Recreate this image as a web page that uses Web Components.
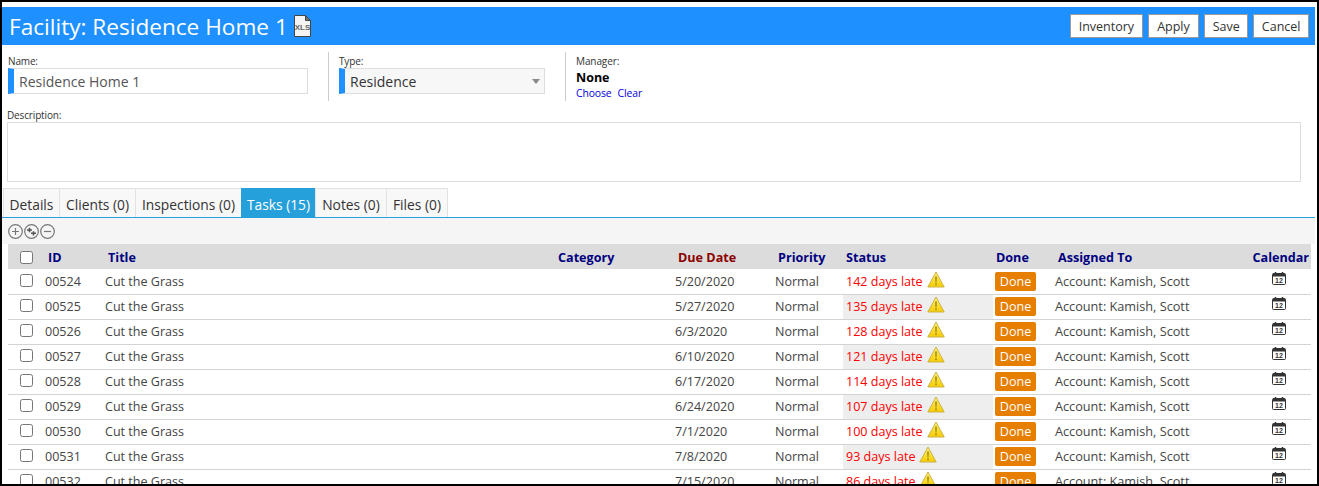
<!DOCTYPE html>
<html>
<head>
<meta charset="utf-8">
<title>Facility</title>
<style>
  html, body { margin: 0; height: 100%; background: #fff; }
  body {
    box-sizing: border-box;
    height: 486px;
    overflow: hidden;
    border: 2px solid #000;
    font-family: "Open Sans", "Noto Sans", sans-serif;
    color: #333;
  }
</style>
</head>
<body>
<facility-page></facility-page>

<script>
const FONT = `"Open Sans", "Noto Sans", sans-serif`;

class TitleBar extends HTMLElement {
  constructor() {
    super();
    this.attachShadow({ mode: "open" });
    this.shadowRoot.innerHTML = `
      <style>
        :host {
          display: flex;
          align-items: center;
          height: 38px;
          margin: 5px 2px 0 0;
          padding: 0 6px 0 7px;
          background: #1e90ff;
          color: #fff;
          font-family: ${FONT};
        }
        h1 {
          margin: 2px 0 0;
          font-size: 22.6px;
          font-weight: 400;
          line-height: 38px;
          white-space: nowrap;
        }
        svg { margin: 0 0 0 6px; }
        .actions { margin-left: auto; display: flex; gap: 5px; margin-top: -1px; }
      </style>
      <h1><slot></slot></h1>
      <svg width="17" height="22" viewBox="0 0 17 22">
        <path d="M.5.5h11l5 5v16H.5z" fill="#f4f4f4" stroke="#444"/>
        <path d="M11.5.5v5h5z" fill="#777" stroke="#444"/>
        <text x="8.5" y="15" text-anchor="middle" font-family="Liberation Sans" font-size="8" font-weight="700" fill="#666">XLS</text>
      </svg>
      <div class="actions"><slot name="actions"></slot></div>
    `;
  }
}

class BarButton extends HTMLElement {
  constructor() {
    super();
    this.attachShadow({ mode: "open" });
    this.shadowRoot.innerHTML = `
      <style>
        :host {
          display: block;
          box-sizing: border-box;
          height: 24px;
          padding: 0 7.5px;
          background: #fff;
          border: 1px solid #999;
          color: #333;
          font-family: ${FONT};
          font-size: 12.5px;
          line-height: 24px;
          white-space: nowrap;
        }
      </style>
      <slot></slot>
    `;
  }
}

class FormField extends HTMLElement {
  constructor() {
    super();
    this.attachShadow({ mode: "open" });
    const kind = this.getAttribute("kind");
    this.shadowRoot.innerHTML = `
      <style>
        :host {
          display: block;
          padding-top: 3px;
          font-family: ${FONT};
          color: #333;
        }
        label { display: block; font-size: 10px; line-height: 13px; height: 13px; letter-spacing: -.15px; }
        .box {
          box-sizing: border-box;
          display: flex;
          align-items: center;
          height: 26px;
          border: 1px solid #ddd;
          border-left: 6px solid #1e90ff;
          padding-left: 5px;
          font-size: 14px;
          color: ${kind === "select" ? "#333" : "#555"};
          background: ${kind === "select" ? "#f7f7f7" : "#fff"};
        }
        .arrow {
          margin-left: auto;
          margin-right: 4px;
          width: 0; height: 0;
          border: 4px solid transparent;
          border-top: 5px solid #888;
          border-bottom: 0;
          display: ${kind === "select" ? "block" : "none"};
        }
      </style>
      <label>${this.getAttribute("label")}</label>
      <div class="box"><slot></slot><span class="arrow"></span></div>
    `;
  }
}

class ManagerField extends HTMLElement {
  constructor() {
    super();
    this.attachShadow({ mode: "open" });
    this.shadowRoot.innerHTML = `
      <style>
        :host { display: block; padding-top: 3px; font-family: ${FONT}; color: #333; }
        label { display: block; font-size: 10px; line-height: 13px; letter-spacing: -.1px; }
        b { display: block; color: #000; font-size: 12.5px; line-height: 18px; margin-top: 1px; }
        .links { display: flex; gap: 6px; font-size: 10.4px; line-height: 14px; color: #0000e0; letter-spacing: -.1px; margin-top: -1px; }
      </style>
      <label>Manager:</label>
      <b>None</b>
      <div class="links"><span>Choose</span><span>Clear</span></div>
    `;
  }
}

class TabStrip extends HTMLElement {
  constructor() {
    super();
    this.attachShadow({ mode: "open" });
    this.shadowRoot.innerHTML = `
      <style>
        :host {
          display: flex;
          height: 30px;
          box-sizing: border-box;
          padding-left: 1px;
          margin-right: 2px;
          border-bottom: 1px solid #26a0da;
          font-family: ${FONT};
        }
      </style>
      <slot></slot>
    `;
  }
}

class TabItem extends HTMLElement {
  constructor() {
    super();
    this.attachShadow({ mode: "open" });
    this.shadowRoot.innerHTML = `
      <style>
        :host {
          display: block;
          box-sizing: border-box;
          height: 29px;
          border: 1px solid #e2e2e2;
          border-bottom: 0;
          margin-right: -1px;
          background: #f8f8f8;
          color: #333;
          font-size: 13.8px;
          line-height: 31px;
          text-align: center;
          white-space: nowrap;
        }
        :host([active]) { background: #26a0da; border-color: #26a0da; color: #fff; }
      </style>
      <slot></slot>
    `;
  }
}

class TreeTools extends HTMLElement {
  constructor() {
    super();
    this.attachShadow({ mode: "open" });
    this.shadowRoot.innerHTML = `
      <style>
        :host {
          display: flex;
          align-items: center;
          gap: 1px;
          height: 26px;
          box-sizing: border-box;
          padding-left: 6px;
          margin-right: 2px;
          background: #f5f5f5;
        }
        svg { fill: none; stroke: #777; stroke-width: 1.2; }
      </style>
      <svg width="15" height="15" viewBox="0 0 15 15"><circle cx="7.5" cy="7.5" r="6.8"/><path d="M4 7.5h7M7.5 4v7"/></svg>
      <svg width="15" height="15" viewBox="0 0 15 15"><circle cx="7.5" cy="7.5" r="6.8"/><path d="M3 6h5M5.5 3.8v4.4M7 9.3h5M9.5 7.2v4.2" stroke="#555" stroke-width="1.6"/></svg>
      <svg width="15" height="15" viewBox="0 0 15 15"><circle cx="7.5" cy="7.5" r="6.8"/><path d="M4 7.5h7"/></svg>
    `;
  }
}

const COLUMNS = "34px 60px 453px 117px 100px 71px 150px 59px 198px 61px";

class TaskHead extends HTMLElement {
  constructor() {
    super();
    this.attachShadow({ mode: "open" });
    const heads = [["ID", 6], ["Title", 6], ["Category", 3], ["Due Date", 6, "#8b0000"], ["Priority", 6], ["Status", 3], ["Done", 3], ["Assigned To", 6]];
    this.shadowRoot.innerHTML = `
      <style>
        :host {
          display: grid;
          grid-template-columns: ${COLUMNS};
          height: 25px;
          align-items: center;
          margin: 0 6px 1px;
          background: #dcdcdc;
          color: #000080;
          font-family: ${FONT};
          font-size: 12.6px;
          font-weight: 700;
        }
        span { padding-top: 1px; white-space: nowrap; }
        .box {
          box-sizing: border-box;
          width: 13px; height: 13px;
          margin: 2px 0 0 12px;
          border: 1px solid #767676;
          border-radius: 2.5px;
          background: #fff;
        }
        .cal { justify-self: end; padding-right: 2px; }
      </style>
      <div class="box"></div>
      ${heads.map(h => `<span style="padding-left:${h[1]}px;${h[2] ? "color:" + h[2] : ""}">${h[0]}</span>`).join("")}
      <span class="cal">Calendar</span>
    `;
  }
}

class TaskRow extends HTMLElement {
  constructor() {
    super();
    this.attachShadow({ mode: "open" });
    const shade = this.hasAttribute("shade");
    this.shadowRoot.innerHTML = `
      <style>
        :host {
          display: grid;
          grid-template-columns: ${COLUMNS};
          height: 25px;
          box-sizing: border-box;
          margin: 0 6px;
          border-bottom: 1px solid #d3d3d3;
          color: #444;
          font-family: ${FONT};
          font-size: 12.55px;
          line-height: 24px;
          white-space: nowrap;
        }
        span { padding-left: 3px; }
        .box {
          box-sizing: border-box;
          width: 13px; height: 13px;
          margin: 4px 0 0 12px;
          border: 1px solid #767676;
          border-radius: 2.5px;
          background: #fff;
        }
        .status {
          display: flex;
          align-items: center;
          gap: 4px;
          color: #f00;
          background: ${shade ? "#eee" : "transparent"};
        }
        .status svg { margin-top: -5px; }
        .done { padding: 2px 0 0 2px; }
        .done b {
          display: block;
          width: 41px; height: 19px;
          border-radius: 2px;
          background: #e67e00;
          color: #fff;
          font-weight: 400;
          text-align: center;
          line-height: 20px;
        }
        .who { font-size: 12.7px; line-height: 23px; }
        .cal { padding: 1px 0 0 22px; }
        .cal svg { display: block; }
      </style>
      <div class="box"></div>
      <span>${this.getAttribute("task")}</span>
      <span>Cut the Grass</span>
      <span></span>
      <span>${this.getAttribute("due")}</span>
      <span>Normal</span>
      <span class="status">${this.getAttribute("late")} days late
        <svg width="18" height="17" viewBox="0 0 18 17">
          <defs><linearGradient id="w" x1="0" y1="0" x2="0" y2="1"><stop offset="0" stop-color="#fff370"/><stop offset="1" stop-color="#f7cb00"/></linearGradient></defs>
          <path d="M9 1 17.2 16H.8z" fill="url(#w)" stroke="#c9b24a" stroke-linejoin="round"/>
          <path d="M8 5.5h2L9.6 11.5H8.4z" fill="#a8921c"/><circle cx="9" cy="13.3" r="1" fill="#a8921c"/>
        </svg>
      </span>
      <span class="done"><b>Done</b></span>
      <span class="who">Account: Kamish, Scott</span>
      <span class="cal">
        <svg width="14" height="15" viewBox="0 0 14 15">
          <path d="M1.5 2.5h11a1 1 0 0 1 1 1v9a1 1 0 0 1-1 1h-11a1 1 0 0 1-1-1v-9a1 1 0 0 1 1-1z" fill="#fff" stroke="#333"/>
          <path d="M1 2.5h12v3H1z" fill="#333"/><path d="M3.5 1v2M10.5 1v2" stroke="#333" stroke-width="1.5"/>
          <text x="7" y="12.3" text-anchor="middle" font-family="Liberation Sans" font-size="7" font-weight="700" fill="#333">12</text>
        </svg>
      </span>
    `;
  }
}

class FacilityPage extends HTMLElement {
  constructor() {
    super();
    this.attachShadow({ mode: "open" });
    const rows = [
      ["00524", "5/20/2020", 142], ["00525", "5/27/2020", 135], ["00526", "6/3/2020", 128],
      ["00527", "6/10/2020", 121], ["00528", "6/17/2020", 114], ["00529", "6/24/2020", 107],
      ["00530", "7/1/2020", 100], ["00531", "7/8/2020", 93], ["00532", "7/15/2020", 86]
    ];
    this.shadowRoot.innerHTML = `
      <style>
        :host { display: block; font-family: ${FONT}; color: #333; }
        .fields { display: flex; padding: 7px 0 0 6px; height: 49px; }
        .sep { border-left: 1px solid #ccc; height: 49px; }
        .desc { padding: 8px 16px 0 5px; }
        .desc label { display: block; font-size: 10px; line-height: 13px; letter-spacing: -.15px; }
        .desc div { box-sizing: border-box; height: 60px; border: 1px solid #ddd; }
        tab-strip { margin-top: 6px; }
      </style>
      <title-bar>Facility: Residence Home 1
        <bar-button slot="actions">Inventory</bar-button>
        <bar-button slot="actions" style="padding:0 8.5px">Apply</bar-button>
        <bar-button slot="actions">Save</bar-button>
        <bar-button slot="actions">Cancel</bar-button>
      </title-bar>
      <div class="fields">
        <form-field label="Name:" style="width:300px;margin-right:20px">Residence Home 1</form-field>
        <div class="sep"></div>
        <form-field label="Type:" kind="select" style="width:206px;margin:0 20px 0 10px">Residence</form-field>
        <div class="sep"></div>
        <manager-field style="margin-left:10px"></manager-field>
      </div>
      <div class="desc"><label>Description:</label><div></div></div>
      <tab-strip>
        <tab-item style="width:57px">Details</tab-item><tab-item style="width:77px">Clients (0)</tab-item><tab-item style="width:107px">Inspections (0)</tab-item>
        <tab-item active style="width:75px">Tasks (15)</tab-item><tab-item style="width:72px">Notes (0)</tab-item><tab-item style="width:62px">Files (0)</tab-item>
      </tab-strip>
      <tree-tools></tree-tools>
      <task-head></task-head>
      ${rows.map((r, i) => `<task-row task="${r[0]}" due="${r[1]}" late="${r[2]}" ${i % 2 ? "shade" : ""}></task-row>`).join("")}
    `;
  }
}

customElements.define("title-bar", TitleBar);
customElements.define("bar-button", BarButton);
customElements.define("form-field", FormField);
customElements.define("manager-field", ManagerField);
customElements.define("tab-strip", TabStrip);
customElements.define("tab-item", TabItem);
customElements.define("tree-tools", TreeTools);
customElements.define("task-head", TaskHead);
customElements.define("task-row", TaskRow);
customElements.define("facility-page", FacilityPage);
</script>
</body>
</html>
